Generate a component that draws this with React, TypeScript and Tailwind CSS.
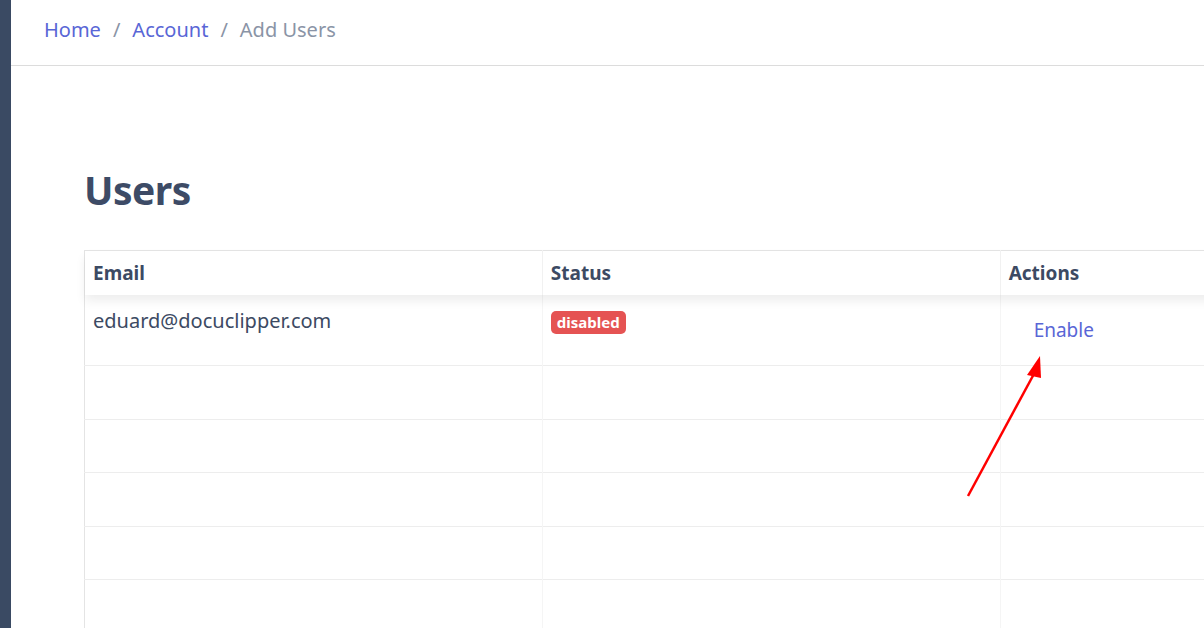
import React from "react";

const users = [{ email: "eduard@docuclipper.com", status: "disabled" }];

export default function App() {
  const emptyRows = [1, 2, 3, 4, 5];

  return (
    <div className="flex h-[628px] w-[1204px] overflow-hidden bg-white text-[#3c4a63]" style={{ fontFamily: '"Noto Sans", "Open Sans", sans-serif' }}>
      <aside className="w-[11px] shrink-0 bg-[#3a4a63]" />

      <main className="relative min-w-0 flex-1">
        <header className="flex h-[66px] items-center border-b border-[#dcdcdc] pl-[33px] pb-[6px] text-[20px]">
          <a href="#" className="text-[#5966d6]">Home</a>
          <span className="mx-[12px] text-[#8a94a6]">/</span>
          <a href="#" className="text-[#5966d6]">Account</a>
          <span className="mx-[12px] text-[#8a94a6]">/</span>
          <span className="text-[#8a94a6]">Add Users</span>
        </header>

        <section className="pl-[73px] pt-[97px]">
          <h1 className="mb-[33px] text-[39px] leading-[54px] font-bold tracking-[-0.5px] text-[#3d4b66]">Users</h1>

          <table className="w-[1374px] table-fixed border-collapse border-l border-t border-[#e4e4e4] text-[20px]">
            <thead className="relative z-10 shadow-[0_6px_10px_rgba(0,0,0,0.07)]">
              <tr className="h-[44px] text-[19px]">
                <th className="border-r border-[#f1f1f1] px-[8px] pt-[1px] text-left font-bold">Email</th>
                <th className="border-r border-[#f1f1f1] px-[8px] pt-[1px] text-left font-bold">Status</th>
                <th className="px-[8px] pt-[1px] text-left font-bold">Actions</th>
              </tr>
            </thead>
            <tbody>
              {users.map((user) => (
                <tr key={user.email} className="h-[71px] border-b border-[#ededed] align-top">
                  <td className="border-r border-[#f5f5f5] px-[8px] pt-[11px]">{user.email}</td>
                  <td className="border-r border-[#f5f5f5] px-[8px] pt-[11px]">
                    <span className="rounded-[5px] bg-[#e55353] px-[6px] pb-[2px] pt-[1px] text-[15px] font-bold text-white">{user.status}</span>
                  </td>
                  <td className="px-[8px] pt-[13px]">
                    <button className="px-[25px] py-[8px] text-[19px] text-[#5966d6]">Enable</button>
                  </td>
                </tr>
              ))}
              {emptyRows.map((r) => (
                <tr key={r} className="h-[53.5px] border-b border-[#ededed]">
                  <td className="border-r border-[#f5f5f5]" />
                  <td className="border-r border-[#f5f5f5]" />
                  <td />
                </tr>
              ))}
            </tbody>
          </table>
        </section>

        <svg className="pointer-events-none absolute left-[940px] top-[340px]" width="120" height="170" viewBox="0 0 120 170">
          <line x1="17" y1="156" x2="84" y2="32" stroke="#ff0000" strokeWidth="2.5" />
          <polygon points="89,16 76,35 90,38" fill="#ff0000" />
        </svg>
      </main>
    </div>
  );
}
